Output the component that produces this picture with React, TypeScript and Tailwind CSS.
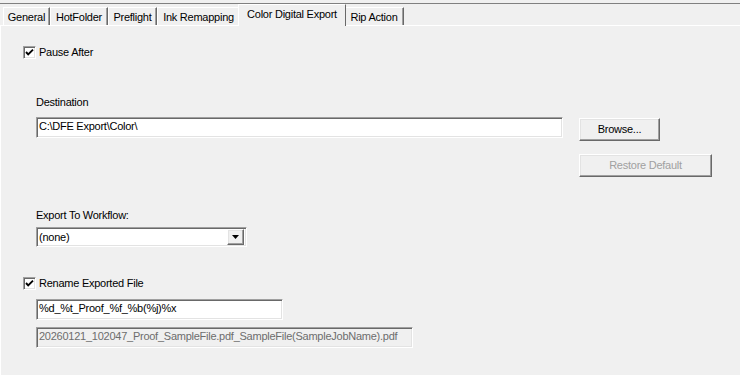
/**
 * Color Digital Export settings tab
 *
 * Classic Windows property page with a tab strip, check boxes,
 * text fields and 3D buttons.
 */

const tabs: { label: string; width: string; selected?: boolean }[] = [
  { label: 'General', width: 'w-[47px]' },
  { label: 'HotFolder', width: 'w-[58px]' },
  { label: 'Preflight', width: 'w-[49px]' },
  { label: 'Ink Remapping', width: 'w-[83px]' },
  { label: 'Color Digital Export', width: 'w-[108px]', selected: true },
  { label: 'Rip Action', width: 'w-[60px]' },
];

/** sunken 3D edge (edit boxes, check boxes) */
const sunken =
  'border border-t-[#a0a0a0] border-l-[#a0a0a0] border-b-white border-r-white shadow-[inset_1px_1px_0_#696969,inset_-1px_-1px_0_#e3e3e3]';

/** raised 3D edge (buttons) */
const raised =
  'border border-t-white border-l-white border-b-[#696969] border-r-[#696969] shadow-[inset_-1px_-1px_0_#a0a0a0,inset_1px_1px_0_#e3e3e3]';

function CheckBox({ label }: { label: string }): React.JSX.Element {
  return (
    <div className="flex items-center h-[13px] pl-[22px]">
      <div className={`w-[13px] h-[13px] bg-white flex items-center justify-center ${sunken}`}>
        <svg width="9" height="9" viewBox="0 0 9 9">
          <path d="M1 4 L3.2 6.4 L8 1.6" fill="none" stroke="#000" strokeWidth="1.9" />
        </svg>
      </div>
      <span className="ml-[3px] leading-[13px]">{label}</span>
    </div>
  );
}

function TextBox({ value, width, disabled }: { value: string; width: string; disabled?: boolean }): React.JSX.Element {
  return (
    <div
      className={`${width} h-[21px] pl-[2px] pt-[2px] leading-[13px] whitespace-nowrap overflow-hidden ${sunken} ${
        disabled ? 'bg-[#f0f0f0] text-[#6d6d6d]' : 'bg-white text-black'
      }`}
    >
      {value}
    </div>
  );
}

function Button({ label, width, disabled }: { label: string; width: string; disabled?: boolean }): React.JSX.Element {
  return (
    <div
      className={`${width} h-[23px] flex items-center justify-center bg-[#f0f0f0] ${raised} ${
        disabled ? 'text-[#a0a0a0]' : 'text-black'
      }`}
    >
      {label}
    </div>
  );
}

export default function App(): React.JSX.Element {
  return (
    <div className="w-[740px] h-[375px] bg-[#f0f0f0] overflow-hidden flex flex-col text-[11px] tracking-[-0.25px] text-black font-['Liberation_Sans',Arial,sans-serif]">
      {/* top edge */}
      <div className="h-[3px]" />
      <div className="h-px bg-[#808080]" />

      {/* tab strip */}
      <div className="h-[22px] flex items-end pl-[3px] border-b border-white">
        {tabs.map((tab) =>
          tab.selected ? (
            <div
              key={tab.label}
              className={`${tab.width} -mx-[2px] -mb-px relative z-10 h-[22px] bg-[#f0f0f0] border-t border-l border-white border-r border-r-[#696969] flex justify-center pt-[3px] leading-[13px]`}
            >
              {tab.label}
            </div>
          ) : (
            <div
              key={tab.label}
              className={`${tab.width} h-[18px] border-t border-l border-white border-r border-r-[#696969] shadow-[inset_-1px_0_0_#a0a0a0] flex justify-center pt-[3px] leading-[13px]`}
            >
              {tab.label}
            </div>
          )
        )}
      </div>

      {/* page body */}
      <div className="flex-1 border-l border-white flex flex-col">
        <div className="mt-[20px]">
          <CheckBox label="Pause After" />
        </div>

        <div className="pl-[35px] flex flex-col">
          <span className="mt-[37px] leading-[13px]">Destination</span>
          <div className="mt-[8px] flex items-start">
            <TextBox value="C:\DFE Export\Color\" width="w-[527px]" />
            <div className="ml-[16px] mt-px">
              <Button label="Browse..." width="w-[81px]" />
            </div>
          </div>
          <div className="mt-[13px] ml-[543px]">
            <Button label="Restore Default" width="w-[133px]" disabled />
          </div>

          <span className="mt-[32px] leading-[13px]">Export To Workflow:</span>
          <div className={`mt-[5px] w-[211px] h-[20px] bg-white flex items-center justify-between pl-[2px] pr-[2px] ${sunken}`}>
            <span className="leading-[13px]">(none)</span>
            <div className={`w-[17px] h-[16px] flex items-center justify-center bg-[#f0f0f0] ${raised}`}>
              <svg width="7" height="4" viewBox="0 0 7 4">
                <path d="M0 0 H7 L3.5 4 Z" fill="#000" />
              </svg>
            </div>
          </div>
        </div>

        <div className="mt-[30px]">
          <CheckBox label="Rename Exported File" />
        </div>

        <div className="pl-[35px] flex flex-col">
          <div className="mt-[9px]">
            <TextBox value="%d_%t_Proof_%f_%b(%j)%x" width="w-[247px]" />
          </div>
          <div className="mt-[7px]">
            <TextBox value="20260121_102047_Proof_SampleFile.pdf_SampleFile(SampleJobName).pdf" width="w-[377px]" disabled />
          </div>
        </div>
      </div>
    </div>
  );
}
